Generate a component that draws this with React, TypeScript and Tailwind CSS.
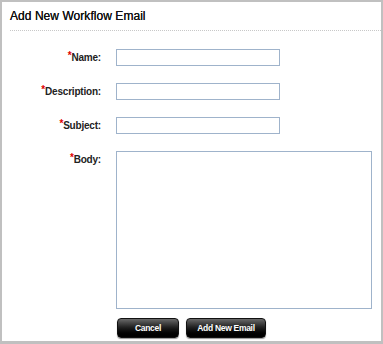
import React from "react";

const fields = [
  { label: "Name" },
  { label: "Description" },
  { label: "Subject" },
];

function Label({ text }: { text: string }) {
  return (
    <span className="font-bold text-[10px] text-[#222] tracking-[-0.2px]">
      <span className="text-[#e00000] relative top-[-2px] text-[10px]">*</span>
      {text}:
    </span>
  );
}

function BlackButton({ children, w }: { children: React.ReactNode; w: string }) {
  return (
    <button
      className={`${w} h-[20px] rounded-[4px] border border-[#111] bg-gradient-to-b from-[#6a6a6a] via-[#1c1c1c] to-[#000] text-white font-bold text-[8.5px] tracking-[-0.3px] shadow-[0_1px_1px_rgba(0,0,0,0.4)]`}
    >
      {children}
    </button>
  );
}

export default function App() {
  return (
    <div
      className="w-[383px] h-[344px] bg-white border-2 border-b-[3px] border-[#c0c0c0] flex flex-col"
      style={{ fontFamily: '"Liberation Sans", Arial, sans-serif' }}
    >
      {/* header */}
      <div className="ml-2 pt-[7px] pb-[7px] border-b border-dotted border-[#c8c8c8]">
        <h1 className="text-[12px] leading-[14px] text-[#111] tracking-[0.05px] [text-shadow:0_0_0.3px_#111]">Add New Workflow Email</h1>
      </div>

      {/* form */}
      <div className="grid grid-cols-[99px_1fr] gap-x-[15px] pt-[18px]">
        {fields.map((f, i) => (
          <React.Fragment key={f.label}>
            <div className={`flex justify-end items-center h-[17px] ${i > 0 ? "mt-[17px]" : ""}`}>
              <Label text={f.label} />
            </div>
            <div className={i > 0 ? "mt-[17px]" : ""}>
              <input className="block w-[164px] h-[17px] border border-[#9fb3cb] bg-white outline-none" />
            </div>
          </React.Fragment>
        ))}
        <div className="flex justify-end items-start mt-[17px] pt-[1px]">
          <Label text="Body" />
        </div>
        <div className="mt-[17px]">
          <textarea className="block w-[256px] h-[158px] border border-[#9fb3cb] bg-white outline-none resize-none" />
        </div>
        <div />
        <div className="flex gap-[7px] mt-[9px] pl-[1px]">
          <BlackButton w="w-[62px]">Cancel</BlackButton>
          <BlackButton w="w-[80px]">Add New Email</BlackButton>
        </div>
      </div>
    </div>
  );
}
